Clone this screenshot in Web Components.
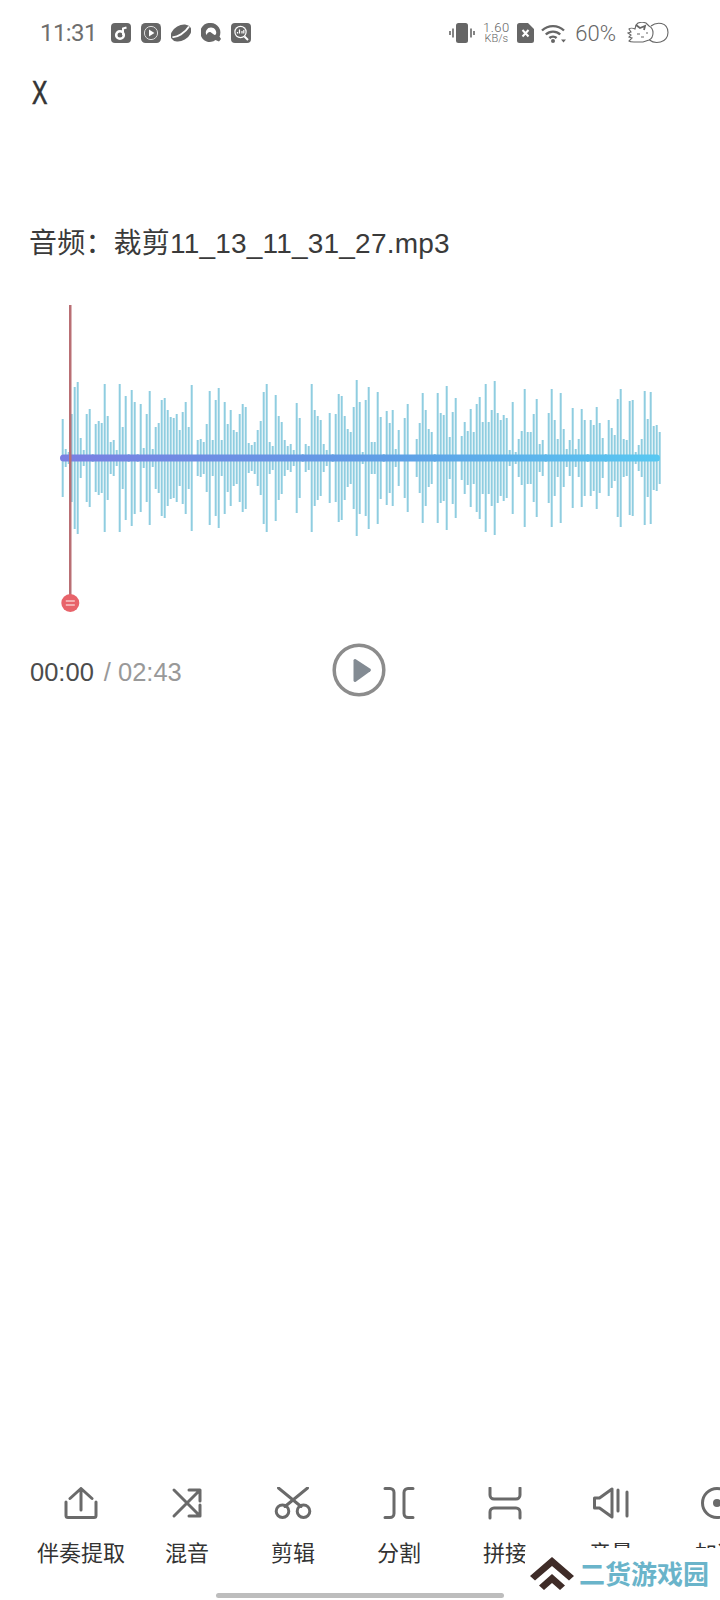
<!DOCTYPE html>
<html>
<head>
<meta charset="utf-8">
<style>
  html, body { margin: 0; background: #fff; }
  body {
    width: 720px;
    height: 1600px;
    overflow: hidden;
    position: relative;
    display: flex;
    flex-direction: column;
    font-family: "Liberation Sans", "Noto Sans CJK SC", sans-serif;
  }
</style>
</head>
<body>
<status-bar></status-bar>
<close-button></close-button>
<audio-title>音频：裁剪11_13_11_31_27.mp3</audio-title>
<wave-view></wave-view>
<play-row current="00:00" total="02:43"></play-row>
<tool-bar>
  <tool-item label="伴奏提取" icon="share"></tool-item>
  <tool-item label="混音" icon="mix"></tool-item>
  <tool-item label="剪辑" icon="cut"></tool-item>
  <tool-item label="分割" icon="split"></tool-item>
  <tool-item label="拼接" icon="join"></tool-item>
  <tool-item label="音量" icon="volume"></tool-item>
  <tool-item label="加速" icon="speed"></tool-item>
</tool-bar>
<home-bar></home-bar>
<water-mark></water-mark>

<script>
// status bar, icons are rough copies of the phone's notification glyphs
class StatusBar extends HTMLElement {
  constructor() {
    super();
    const shadowRoot = this.attachShadow({mode: 'open'});
    shadowRoot.innerHTML = `
      <style>
        :host {
          display: flex;
          align-items: center;
          height: 66px;
          padding: 0 51px 0 40px;
          color: #666;
          box-sizing: border-box;
          font-family: Roboto, "Liberation Sans", sans-serif;
          font-weight: 300;
        }
        .time { font-size: 24px; letter-spacing: -.6px; width: 71px; font-weight: 400; color: #6e6e6e; }
        .apps { display: flex; gap: 10px; }
        .right { display: flex; align-items: center; margin-left: auto; }
        svg { display: block; }
        .speed {
          display: flex;
          flex-direction: column;
          align-items: center;
          width: 26px;
          margin: 0 8px;
        }
        .speed b { font-weight: 300; font-size: 13px; line-height: 12px; letter-spacing: .5px; }
        .speed i { font-style: normal; font-size: 11px; line-height: 10px; }
        .pct { font-size: 22px; margin: 0 11px 0 9px; }
      </style>
      <span class="time">11:31</span>
      <div class="apps">
        <svg width="20" height="20" viewBox="0 0 20 20"><rect width="20" height="20" rx="4" fill="#666"/><circle cx="9" cy="12" r="3.8" fill="none" stroke="#fff" stroke-width="2.6"/><path d="M12 12V5.5l3.500-1" fill="none" stroke="#fff" stroke-width="2"/></svg>
        <svg width="20" height="20" viewBox="0 0 20 20"><rect width="20" height="20" rx="4.5" fill="#666"/><circle cx="10" cy="10" r="6.6" fill="none" stroke="#ddd" stroke-width="1"/><path d="M8 6.6l5.400 3.400L8 13.400z" fill="#fff"/></svg>
        <svg width="20" height="20" viewBox="0 0 20 20"><ellipse cx="10" cy="10" rx="11" ry="7.6" transform="rotate(-30 10 10)" fill="#666"/><path d="M1.5 14C6 14.500 14 10 18 3.500" fill="none" stroke="#fff" stroke-width="1.8"/></svg>
        <svg width="20" height="20" viewBox="0 0 20 20"><path fill-rule="evenodd" d="M10 0a9.500 9.500 0 0 1 8.500 13.500l1.500 2.500-2 2.500-3.500-1.500A9.500 9.500 0 1 1 10 0zm0 4.500a5 5 0 0 0-4.500 7.500c1-2.500 3-3.500 4.500-2.500l3.500 2.500 1.300-.5A5 5 0 0 0 10 4.500z" fill="#666"/></svg>
        <svg width="20" height="20" viewBox="0 0 20 20"><rect width="20" height="20" rx="4" fill="#666"/><circle cx="9.5" cy="9" r="6.2" fill="#fff"/><circle cx="9.5" cy="9" r="5" fill="#666"/><path d="M6.500 10.500V9M8.500 10.500V6.500M11 10.500V8M12.800 10.500V7" stroke="#fff" stroke-width="1.2"/><path d="M13.500 13.500l3.500 3.500" stroke="#fff" stroke-width="2"/></svg>
      </div>
      <div class="right">
        <svg width="26" height="20" viewBox="0 0 26 20"><rect x="7" y="0" width="12" height="20" rx="2.5" fill="#666"/><path d="M4 5.500v9M1 8v4M22 5.500v9M25 8v4" stroke="#666" stroke-width="1.6"/></svg>
        <div class="speed"><b>1.60</b><i>KB/s</i></div>
        <svg width="17" height="20" viewBox="0 0 17 20"><path d="M2.500 0H11l6 6v11.500a2.500 2.500 0 0 1-2.500 2.500h-12A2.500 2.500 0 0 1 0 17.500V2.500A2.500 2.500 0 0 1 2.500 0z" fill="#666"/><path d="M5.500 7l6 6.500M11.500 7l-6 6.500" stroke="#fff" stroke-width="2"/></svg>
        <svg style="margin-left:7px" width="25" height="20" viewBox="0 0 25 20"><path d="M1 7.500a16 16 0 0 1 22 0M4.800 11.500a10.500 10.500 0 0 1 14.400 0M8.400 15a5.400 5.400 0 0 1 7.200 0" fill="none" stroke="#666" stroke-width="2.4"/><circle cx="12" cy="18" r="2" fill="#666"/><path d="M20 16.500h5l-2.500 3z" fill="#666"/></svg>
        <span class="pct">60%</span>
        <svg width="42" height="22" viewBox="0 0 42 22" fill="none" stroke="#666" stroke-width="1.1"><path d="M24 4c3-2.500 7-3.200 10.500-2.500C38.500 2.500 41 6 41 10.500S38 19 33.500 20s-8.500 0-11-2"/><path d="M8 7C6 6 3 6 2 7l2 3-3 1 3 2-2 2 3 1-3 3c1 1 3 1 5 1h9l6-2c2-1 4-4 4-7s-2-6-4-7l-3-3-4-1-4 1-2 2z"/><path d="M9 3l4 3 5-2-1 4" stroke-width="1.8"/><path d="M10 12h3M19 11h2M14 15h3"/></svg>
      </div>
    `;
  }
}
customElements.define('status-bar', StatusBar);

class CloseButton extends HTMLElement {
  constructor() {
    super();
    const shadowRoot = this.attachShadow({mode: 'open'});
    shadowRoot.innerHTML = `
      <style>
        :host { display: block; height: 44px; padding: 5px 0 0 32px; }
        span {
          display: inline-block;
          font-size: 33px;
          line-height: 44px;
          color: #333;
          -webkit-text-stroke: .7px #333;
          transform: scaleX(.7);
          transform-origin: left center;
        }
      </style>
      <span>X</span>
    `;
  }
}
customElements.define('close-button', CloseButton);

class AudioTitle extends HTMLElement {
  constructor() {
    super();
    const shadowRoot = this.attachShadow({mode: 'open'});
    shadowRoot.innerHTML = `
      <style>
        :host {
          display: block;
          margin-top: 109px;
          padding-left: 29px;
          height: 40px;
          font-size: 28px;
          line-height: 40px;
          letter-spacing: .2px;
          color: #3a3a3a;
        }
      </style>
      <slot></slot>
    `;
  }
}
customElements.define('audio-title', AudioTitle);

// half heights of the bars, one every 3px starting at x=62.7
const BARS = [39,9,6,44,71,76,20,8,44,49,4,34,37,35,74,42,16,18,8,74,31,62,4,68,56,4,54,10,44,67,9,31,35,58,60,48,41,40,44,28,46,56,31,73,3,18,19,16,34,67,18,58,70,18,56,34,48,28,26,44,54,51,15,13,16,28,37,66,74,16,12,63,42,
  36,18,12,14,8,55,40,4,14,12,74,48,42,38,14,8,45,4,44,64,62,42,29,26,51,78,56,6,58,71,16,16,66,41,4,47,35,48,9,28,3,40,54,2,2,19,35,65,48,29,26,4,65,45,43,72,21,46,60,3,22,36,27,49,26,54,61,36,74,36,48,77,45,38,43,40,8,56,6,19,27,69,26,26,44,59,14,18,4,45,69,38,19,65,29,9,18,50,9,19,49,38,4,38,33,51,35,20,4,38,30,23,59,69,19,18,57,58,6,13,19,67,39,66,32,33,26];

class WaveView extends HTMLElement {
  constructor() {
    super();
    const shadowRoot = this.attachShadow({mode: 'open'});
    const bars = BARS.map((h, i) => {
      const x = (2.7 + i * 3).toFixed(1);
      return `<line x1="${x}" x2="${x}" y1="${153 - h}" y2="${153 + h}"/>`;
    }).join('');
    shadowRoot.innerHTML = `
      <style>
        :host { display: block; height: 345px; margin-top: 41px; }
        svg { display: block; margin-left: 60px; overflow: visible; }
      </style>
      <svg width="602" height="345" viewBox="0 0 602 345">
        <defs>
          <linearGradient id="mid" x1="0" x2="1" y1="0" y2="0">
            <stop offset="0" stop-color="#7a7fe2"/>
            <stop offset=".55" stop-color="#5f9fe6"/>
            <stop offset="1" stop-color="#58c8f2"/>
          </linearGradient>
        </defs>
        <g stroke="#8fcde0" stroke-width="2">${bars}</g>
        <rect x="0" y="149.5" width="600" height="7" rx="3.5" fill="url(#mid)"/>
        <rect x="9" y="0" width="2.5" height="291" fill="#b96f74"/>
        <circle cx="10.3" cy="298" r="9" fill="#e8636a"/>
        <path d="M5.800 296h9M5.800 300h9" stroke="#f8c8c8" stroke-width="1.5"/>
      </svg>
    `;
  }
}
customElements.define('wave-view', WaveView);

class PlayRow extends HTMLElement {
  constructor() {
    super();
    const shadowRoot = this.attachShadow({mode: 'open'});
    shadowRoot.innerHTML = `
      <style>
        :host {
          display: flex;
          align-items: center;
          height: 56px;
          margin-top: -6px;
          padding-left: 30px;
          font-size: 25.5px;
        }
        .cur { color: #4c4c4c; }
        .tot { color: #999; margin-left: 10px; }
        .play { margin-left: 150px; margin-top: -5px; }
        svg { display: block; }
      </style>
      <span class="cur"></span>
      <span class="tot"></span>
      <svg class="play" width="54" height="54" viewBox="0 0 54 54">
        <circle cx="27" cy="27" r="24.8" fill="none" stroke="#8c8c8c" stroke-width="3.5"/>
        <path d="M21.500 17.500a1.500 1.500 0 0 1 2.300-1.200l14.500 9.500a1.500 1.500 0 0 1 0 2.400L23.800 38.700a1.500 1.500 0 0 1-2.300-1.200z" fill="#838b93"/>
      </svg>
    `;
    shadowRoot.querySelector('.cur').textContent = this.getAttribute('current');
    shadowRoot.querySelector('.tot').textContent = '/ ' + this.getAttribute('total');
  }
}
customElements.define('play-row', PlayRow);

class ToolBar extends HTMLElement {
  constructor() {
    super();
    const shadowRoot = this.attachShadow({mode: 'open'});
    shadowRoot.innerHTML = `
      <style>
        :host {
          display: flex;
          margin-top: auto;
          padding-left: 28px;
          overflow: hidden;
          flex-shrink: 0;
        }
      </style>
      <slot></slot>
    `;
  }
}
customElements.define('tool-bar', ToolBar);

const ICONS = {
  share: '<path d="M1 15v13.500a2 2 0 0 0 2 2h26a2 2 0 0 0 2-2V15M16 23V2.500M5 11.500L16 1.500 27 11.500"/>',
  mix: '<path d="M3 3l26 26M3 29L29 3M18 3h11v11M18 29h11V18"/>',
  cut: '<circle cx="5.5" cy="24.2" r="6.3"/><circle cx="26.5" cy="24.2" r="6.3"/><path d="M1.500 1L24 19.500M30.500 1L8 19.500"/>',
  split: '<path d="M2 1.500h5a4 4 0 0 1 4 4v21a4 4 0 0 1-4 4H2M30 1.500h-5a4 4 0 0 0-4 4v21a4 4 0 0 0 4 4h5"/>',
  join: '<path d="M1 1v7a4 4 0 0 0 4 4h22a4 4 0 0 0 4-4V1M1 31v-6a4 4 0 0 1 4-4h22a4 4 0 0 1 4 4v6"/>',
  volume: '<path d="M-.5 11h5L17 2v28L4.500 21h-5zM23 3v21M32 5v24"/>',
  speed: '<circle cx="16" cy="16" r="14.5"/><circle cx="16" cy="16" r="4" fill="#6a6a6a" stroke="none"/>'
};

class ToolItem extends HTMLElement {
  constructor() {
    super();
    const shadowRoot = this.attachShadow({mode: 'open'});
    const icon = ICONS[this.getAttribute('icon')];
    shadowRoot.innerHTML = `
      <style>
        :host {
          display: flex;
          flex-direction: column;
          align-items: center;
          flex: 0 0 106px;
          font-size: 22px;
          line-height: 32px;
          color: #333;
        }
        svg { display: block; margin-bottom: 19px; overflow: visible; }
      </style>
      <svg width="32" height="32" viewBox="0 0 32 32" fill="none" stroke="#6a6a6a" stroke-width="3" stroke-linecap="round" stroke-linejoin="round">${icon}</svg>
      <span></span>
    `;
    shadowRoot.querySelector('span').textContent = this.getAttribute('label');
  }
}
customElements.define('tool-item', ToolItem);

class HomeBar extends HTMLElement {
  constructor() {
    super();
    const shadowRoot = this.attachShadow({mode: 'open'});
    shadowRoot.innerHTML = `
      <style>
        :host { display: block; padding: 23px 0 2px 216px; flex-shrink: 0; }
        div { width: 288px; height: 5px; border-radius: 3px; background: #bdbdbd; }
      </style>
      <div></div>
    `;
  }
}
customElements.define('home-bar', HomeBar);

// watermark sits over the toolbar, so this one is absolute
class WaterMark extends HTMLElement {
  constructor() {
    super();
    const shadowRoot = this.attachShadow({mode: 'open'});
    shadowRoot.innerHTML = `
      <style>
        :host {
          position: absolute;
          left: 525px;
          top: 1548px;
          width: 195px;
          height: 52px;
          background: #fff;
          display: flex;
          align-items: flex-start;
        }
        svg { display: block; margin: 9px 0 0 5px; flex-shrink: 0; }
        span {
          margin: 11px 0 0 5px;
          font-size: 26px;
          line-height: 32px;
          font-weight: bold;
          color: #6ab4ca;
          white-space: nowrap;
        }
      </style>
      <svg width="44" height="36" viewBox="0 0 44 36"><path d="M22 0l22 19-5 4.500L22 9 5 23.500 0 19zM22 17l13 11.500-5 4.500-8-7-8 7-5-4.500z" fill="#3f2c28"/></svg>
      <span>二货游戏园</span>
    `;
  }
}
customElements.define('water-mark', WaterMark);
</script>
</body>
</html>
